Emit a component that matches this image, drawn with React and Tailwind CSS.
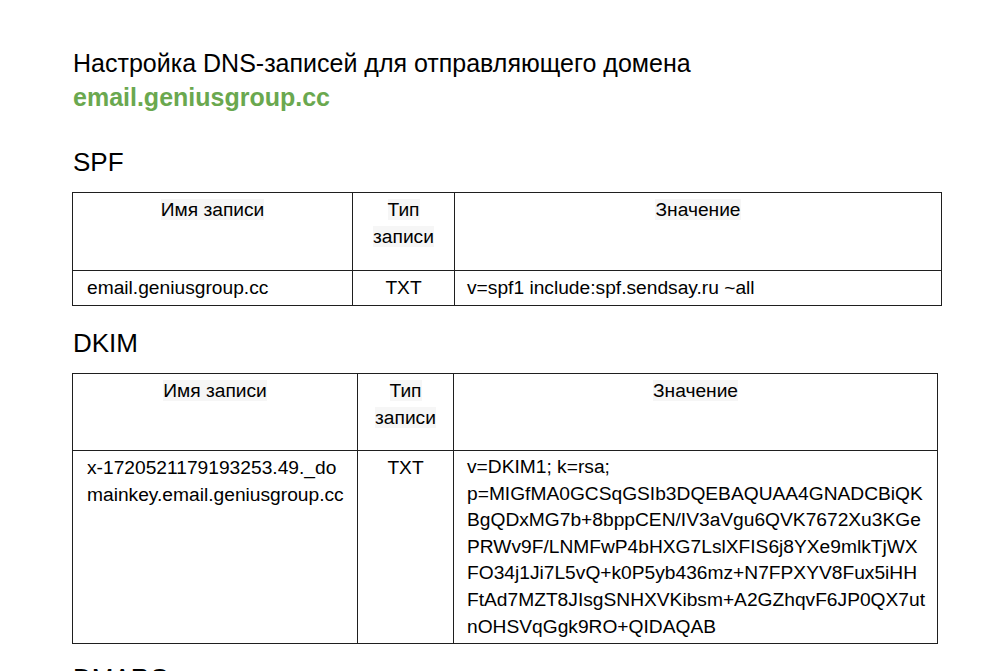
import React from "react";

const font = { fontFamily: '"Liberation Sans", Arial, sans-serif' };

function HeaderText({ children }) {
  return <span className="bg-[#f6f6f6]">{children}</span>;
}

function SpfTable() {
  return (
    <div className="ml-[-1px] mt-[12px] grid w-[870px] grid-cols-[280px_102px_487px] border-b border-r border-[#1f1f1f] text-[19.2px] leading-[27px] text-black">
      <div className="h-[78px] border-l border-t border-[#1f1f1f] pt-[3px] text-center">
        <HeaderText>Имя записи</HeaderText>
      </div>
      <div className="h-[78px] border-l border-t border-[#1f1f1f] pt-[3px] text-center">
        <HeaderText>Тип</HeaderText>
        <br />
        <HeaderText>записи</HeaderText>
      </div>
      <div className="h-[78px] border-l border-t border-[#1f1f1f] pt-[3px] text-center">
        <HeaderText>Значение</HeaderText>
      </div>
      <div className="h-[35px] border-l border-t border-[#1f1f1f] pl-[14px] pt-[3px]">
        email.geniusgroup.cc
      </div>
      <div className="h-[35px] border-l border-t border-[#1f1f1f] pt-[3px] text-center">
        TXT
      </div>
      <div className="h-[35px] border-l border-t border-[#1f1f1f] pl-[12px] pt-[3px]">
        v=spf1 include:spf.sendsay.ru ~all
      </div>
    </div>
  );
}

const dkimLines = [
  "v=DKIM1; k=rsa;",
  "p=MIGfMA0GCSqGSIb3DQEBAQUAA4GNADCBiQK",
  "BgQDxMG7b+8bppCEN/IV3aVgu6QVK7672Xu3KGe",
  "PRWv9F/LNMFwP4bHXG7LslXFIS6j8YXe9mlkTjWX",
  "FO34j1Ji7L5vQ+k0P5yb436mz+N7FPXYV8Fux5iHH",
  "FtAd7MZT8JIsgSNHXVKibsm+A2GZhqvF6JP0QX7ut",
  "nOHSVqGgk9RO+QIDAQAB",
];

function DkimTable() {
  return (
    <div className="ml-[-1px] mt-[12px] grid w-[866px] grid-cols-[285px_96px_484px] border-b border-r border-[#1f1f1f] text-[19.2px] leading-[27px] text-black">
      <div className="h-[77px] border-l border-t border-[#1f1f1f] pt-[3px] text-center">
        <HeaderText>Имя записи</HeaderText>
      </div>
      <div className="h-[77px] border-l border-t border-[#1f1f1f] pt-[3px] text-center">
        <HeaderText>Тип</HeaderText>
        <br />
        <HeaderText>записи</HeaderText>
      </div>
      <div className="h-[77px] border-l border-t border-[#1f1f1f] pt-[3px] text-center">
        <HeaderText>Значение</HeaderText>
      </div>
      <div className="h-[193px] border-l border-t border-[#1f1f1f] pl-[14px] pt-[3px]">
        x-1720521179193253.49._do
        <br />
        mainkey.email.geniusgroup.cc
      </div>
      <div className="h-[193px] border-l border-t border-[#1f1f1f] pt-[3px] text-center">
        TXT
      </div>
      <div className="h-[193px] whitespace-nowrap border-l border-t border-[#1f1f1f] pl-[13px] pt-[3px] leading-[26.6px]">
        {dkimLines.map((l, i) => (
          <div key={i}>{l}</div>
        ))}
      </div>
    </div>
  );
}

export default function App() {
  return (
    <div
      className="h-[671px] w-[993px] overflow-hidden bg-white pl-[73px] pt-[47px] text-black"
      style={font}
    >
      <div className="text-[25px] leading-[32px]">
        Настройка DNS-записей для отправляющего домена
      </div>
      <div className="mt-[2px] text-[25px] font-bold leading-[32px] text-[#6aa84f]">
        email.geniusgroup.cc
      </div>
      <div className="mt-[31px] text-[26px] leading-[36px]">SPF</div>
      <SpfTable />
      <div className="mt-[19px] text-[26px] leading-[36px]">DKIM</div>
      <DkimTable />
      <div className="mt-[16px] text-[26px] leading-[36px]">DMARC</div>
    </div>
  );
}
